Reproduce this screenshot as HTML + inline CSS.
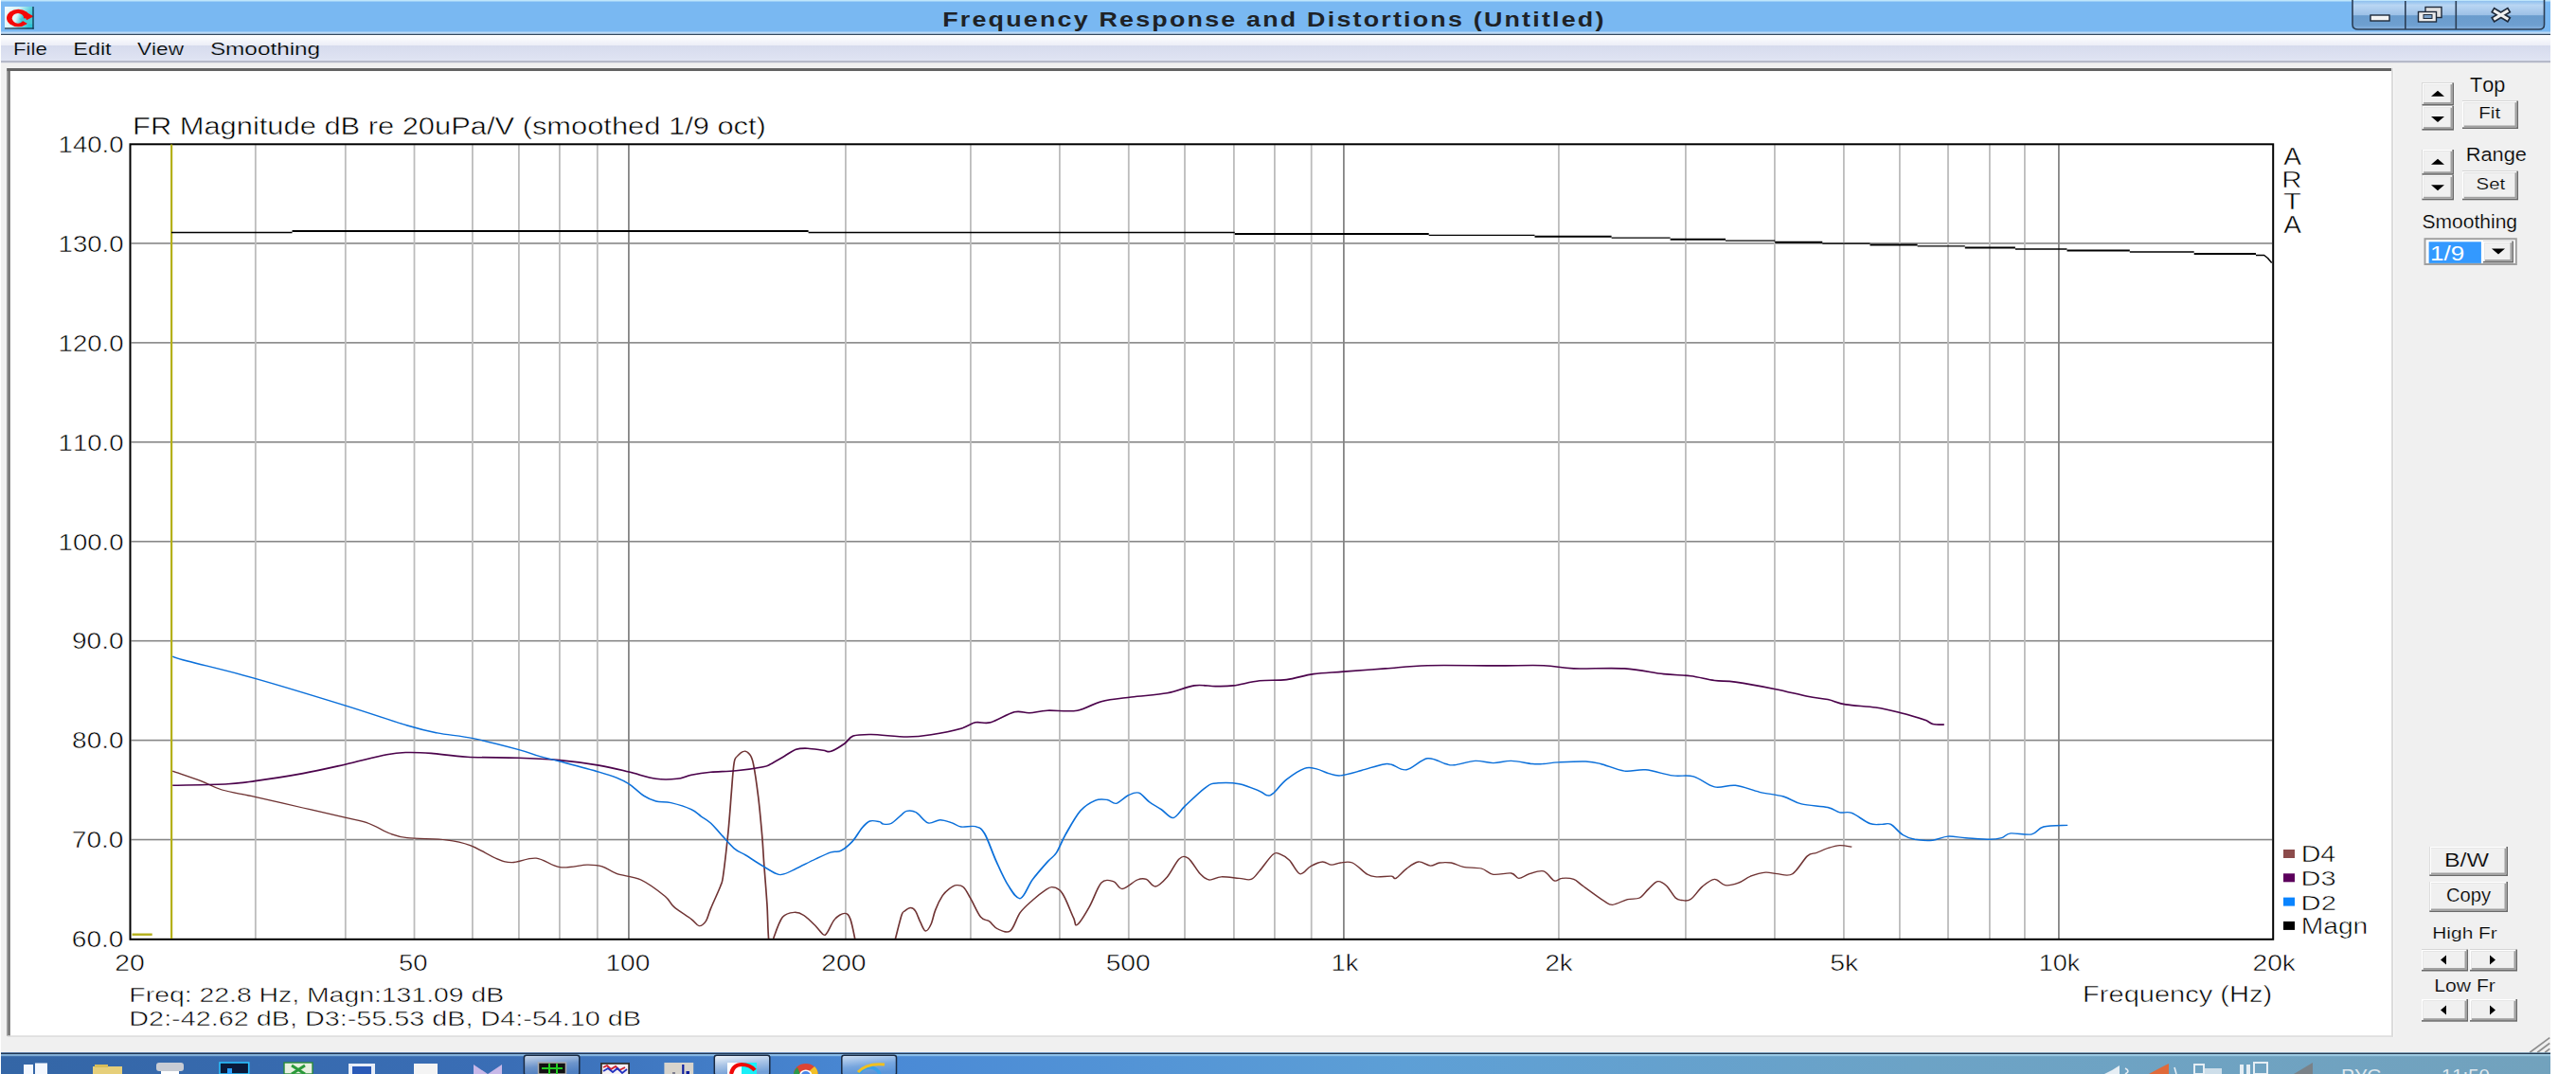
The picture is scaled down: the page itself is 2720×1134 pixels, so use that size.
<!DOCTYPE html>
<html><head><meta charset="utf-8"><style>
html,body{margin:0;padding:0;background:#fff;overflow:hidden}
svg{display:block}
text{font-family:"Liberation Sans",sans-serif;font-kerning:none}
</style></head><body>
<svg width="2720" height="1134" viewBox="0 0 2720 1134">
<rect x="0" y="0" width="2720" height="1134" fill="#ffffff"/>
<rect x="1" y="0" width="2692" height="1112" fill="#f0f0f0"/>
<defs><linearGradient id="menuG" x1="0" y1="0" x2="0" y2="1"><stop offset="0" stop-color="#ffffff"/><stop offset="0.4" stop-color="#eceef7"/><stop offset="0.42" stop-color="#d6dbed"/><stop offset="1" stop-color="#e0e4f3"/></linearGradient><linearGradient id="btnG" x1="0" y1="0" x2="0" y2="1"><stop offset="0" stop-color="#8fc0ee"/><stop offset="0.15" stop-color="#b9d6f3"/><stop offset="0.5" stop-color="#9cc0e6"/><stop offset="0.52" stop-color="#6a9ccd"/><stop offset="0.85" stop-color="#6e9fd0"/><stop offset="1" stop-color="#8ab4e2"/></linearGradient><linearGradient id="tbG" x1="0" y1="0" x2="1" y2="0"><stop offset="0" stop-color="#3466a6"/><stop offset="0.2" stop-color="#3a6eb6"/><stop offset="0.35" stop-color="#4a8ad6"/><stop offset="0.55" stop-color="#5d9fd6"/><stop offset="0.75" stop-color="#6ca3c6"/><stop offset="1" stop-color="#72a2bd"/></linearGradient><linearGradient id="pbG" x1="0" y1="0" x2="0" y2="1"><stop offset="0" stop-color="#f4f4f4"/><stop offset="1" stop-color="#e4e4e4"/></linearGradient></defs>
<rect x="1" y="0" width="2692" height="37" fill="#79b8f2"/>
<rect x="1" y="0" width="2692" height="1.5" fill="#bfe6fb"/>
<rect x="1" y="33.5" width="2692" height="2.5" fill="#bcdaf6"/>
<rect x="1" y="35.8" width="2692" height="1.4" fill="#34495e"/>
<rect x="1" y="37" width="2692" height="27" fill="url(#menuG)"/>
<rect x="1" y="64" width="2692" height="2.2" fill="#b6bac9"/>
<linearGradient id="icoG" x1="0" y1="0" x2="1" y2="0.3"><stop offset="0" stop-color="#f4fcff"/><stop offset="0.45" stop-color="#d8f4f8"/><stop offset="1" stop-color="#2cc4d4"/></linearGradient>
<rect x="5" y="7" width="30.7" height="23.7" fill="url(#icoG)"/>
<ellipse cx="19.3" cy="19" rx="12.3" ry="9.2" fill="#f40808"/>
<ellipse cx="19" cy="19.3" rx="6.2" ry="5.4" fill="url(#icoG)"/>
<path d="M20 19.8 L36 18.8 L36 25.5 L29.5 25.2 Z" fill="#48c8d6"/>
<path d="M25 11.5 L35.6 17.3 L28 21.2 Z" fill="#f40808"/>
<rect x="34.3" y="7" width="1.4" height="23.7" fill="#1c3c5c"/>
<rect x="5" y="29.3" width="30.7" height="1.4" fill="#1c3c5c"/>
<text transform="translate(995.20,28.00) scale(1.1800,1)" font-size="22.77" font-weight="bold" letter-spacing="1.866" fill="#1e2226" >Frequency Response and Distortions (Untitled)</text>
<path d="M2484 1 L2484 26 Q2484 31 2490 31 L2681 31 Q2686.5 31 2686.5 26 L2686.5 1 Z" fill="url(#btnG)"/>
<path d="M2484 0 L2484 26 Q2484 31 2490 31 L2681 31 Q2686.5 31 2686.5 26 L2686.5 0" fill="none" stroke="#2b3e55" stroke-width="1.6"/>
<rect x="2539" y="1" width="1.6" height="30" fill="#2b3e55"/>
<rect x="2592.5" y="1" width="1.6" height="30" fill="#2b3e55"/>
<rect x="2503" y="16" width="20" height="6" fill="#f4f4f4" stroke="#1e2a3a" stroke-width="1.4"/>
<rect x="2561" y="7.5" width="17" height="11" fill="#e0e0e0" stroke="#1e2a3a" stroke-width="1.4"/>
<rect x="2553.5" y="12.5" width="19" height="10.5" fill="#ececec" stroke="#1e2a3a" stroke-width="1.4"/>
<rect x="2559" y="15.5" width="9" height="4" fill="#7aa0c8" stroke="#1e2a3a" stroke-width="1"/>
<path d="M2634.5 12 L2647 19.5 M2647 12 L2634.5 19.5" stroke="#1e2a3a" stroke-width="6.5" stroke-linecap="square"/>
<path d="M2634.5 12 L2647 19.5 M2647 12 L2634.5 19.5" stroke="#f0f0f0" stroke-width="3.2" stroke-linecap="square"/>
<text transform="translate(13.98,58.00) scale(1.1876,1)" font-size="18.71" font-weight="normal" fill="#000"  stroke="#dde1f1" stroke-width="0.2">File</text>
<text transform="translate(77.28,58.00) scale(1.2526,1)" font-size="18.71" font-weight="normal" fill="#000"  stroke="#dde1f1" stroke-width="0.2">Edit</text>
<text transform="translate(145.10,58.00) scale(1.2042,1)" font-size="18.71" font-weight="normal" fill="#000"  stroke="#dde1f1" stroke-width="0.2">View</text>
<text transform="translate(221.90,58.00) scale(1.2996,1)" font-size="18.71" font-weight="normal" fill="#000"  stroke="#dde1f1" stroke-width="0.2">Smoothing</text>
<rect x="7.5" y="72" width="2520" height="1023" fill="#ffffff"/>
<rect x="7.5" y="72" width="2519" height="3" fill="#646464"/>
<rect x="7.3" y="72" width="3.4" height="1022" fill="#646464"/>
<rect x="7.3" y="75" width="1.6" height="1019" fill="#a0a0a0"/>
<rect x="2525" y="72" width="2" height="1022" fill="#dcdcdc"/>
<rect x="7.5" y="1093.3" width="2519.5" height="1.6" fill="#dcdcdc"/>
<rect x="138.5" y="885.76" width="2260.7" height="1.6" fill="#878787"/>
<rect x="138.5" y="780.83" width="2260.7" height="1.6" fill="#878787"/>
<rect x="138.5" y="675.89" width="2260.7" height="1.6" fill="#878787"/>
<rect x="138.5" y="570.95" width="2260.7" height="1.6" fill="#878787"/>
<rect x="138.5" y="466.01" width="2260.7" height="1.6" fill="#878787"/>
<rect x="138.5" y="361.07" width="2260.7" height="1.6" fill="#878787"/>
<rect x="138.5" y="256.14" width="2260.7" height="1.6" fill="#878787"/>
<rect x="268.90" y="153.1" width="1.8" height="837.9" fill="#bcbcbc"/>
<rect x="363.90" y="153.1" width="1.8" height="837.9" fill="#bcbcbc"/>
<rect x="436.60" y="153.1" width="1.8" height="837.9" fill="#bcbcbc"/>
<rect x="498.00" y="153.1" width="1.8" height="837.9" fill="#bcbcbc"/>
<rect x="547.00" y="153.1" width="1.8" height="837.9" fill="#bcbcbc"/>
<rect x="590.00" y="153.1" width="1.8" height="837.9" fill="#bcbcbc"/>
<rect x="629.90" y="153.1" width="1.8" height="837.9" fill="#bcbcbc"/>
<rect x="663.00" y="153.1" width="1.8" height="837.9" fill="#858585"/>
<rect x="892.00" y="153.1" width="1.8" height="837.9" fill="#bcbcbc"/>
<rect x="1024.00" y="153.1" width="1.8" height="837.9" fill="#bcbcbc"/>
<rect x="1118.00" y="153.1" width="1.8" height="837.9" fill="#bcbcbc"/>
<rect x="1190.90" y="153.1" width="1.8" height="837.9" fill="#bcbcbc"/>
<rect x="1250.10" y="153.1" width="1.8" height="837.9" fill="#bcbcbc"/>
<rect x="1302.00" y="153.1" width="1.8" height="837.9" fill="#bcbcbc"/>
<rect x="1345.00" y="153.1" width="1.8" height="837.9" fill="#bcbcbc"/>
<rect x="1383.80" y="153.1" width="1.8" height="837.9" fill="#bcbcbc"/>
<rect x="1418.00" y="153.1" width="1.8" height="837.9" fill="#858585"/>
<rect x="1645.00" y="153.1" width="1.8" height="837.9" fill="#bcbcbc"/>
<rect x="1779.00" y="153.1" width="1.8" height="837.9" fill="#bcbcbc"/>
<rect x="1873.00" y="153.1" width="1.8" height="837.9" fill="#bcbcbc"/>
<rect x="1946.00" y="153.1" width="1.8" height="837.9" fill="#bcbcbc"/>
<rect x="2005.00" y="153.1" width="1.8" height="837.9" fill="#bcbcbc"/>
<rect x="2056.10" y="153.1" width="1.8" height="837.9" fill="#bcbcbc"/>
<rect x="2100.00" y="153.1" width="1.8" height="837.9" fill="#bcbcbc"/>
<rect x="2137.00" y="153.1" width="1.8" height="837.9" fill="#bcbcbc"/>
<rect x="2173.00" y="153.1" width="1.8" height="837.9" fill="#858585"/>
<rect x="137.5" y="152.29999999999998" width="2262.7" height="839.5" fill="none" stroke="#000" stroke-width="2"/>
<text transform="translate(75.87,1000.30) scale(1.1527,1)" font-size="24.35" font-weight="normal" fill="#000"  stroke="#fff" stroke-width="0.5">60.0</text>
<text transform="translate(75.86,895.36) scale(1.1530,1)" font-size="24.35" font-weight="normal" fill="#000"  stroke="#fff" stroke-width="0.5">70.0</text>
<text transform="translate(76.09,790.42) scale(1.1482,1)" font-size="24.35" font-weight="normal" fill="#000"  stroke="#fff" stroke-width="0.5">80.0</text>
<text transform="translate(75.99,685.49) scale(1.1503,1)" font-size="24.35" font-weight="normal" fill="#000"  stroke="#fff" stroke-width="0.5">90.0</text>
<text transform="translate(61.60,580.55) scale(1.1304,1)" font-size="24.35" font-weight="normal" fill="#000"  stroke="#fff" stroke-width="0.5">100.0</text>
<text transform="translate(61.60,475.61) scale(1.1304,1)" font-size="24.35" font-weight="normal" fill="#000"  stroke="#fff" stroke-width="0.5">110.0</text>
<text transform="translate(61.60,370.68) scale(1.1304,1)" font-size="24.35" font-weight="normal" fill="#000"  stroke="#fff" stroke-width="0.5">120.0</text>
<text transform="translate(61.60,265.74) scale(1.1304,1)" font-size="24.35" font-weight="normal" fill="#000"  stroke="#fff" stroke-width="0.5">130.0</text>
<text transform="translate(61.60,160.80) scale(1.1304,1)" font-size="24.35" font-weight="normal" fill="#000"  stroke="#fff" stroke-width="0.5">140.0</text>
<text transform="translate(121.27,1024.80) scale(1.1925,1)" font-size="23.77" font-weight="normal" fill="#000"  stroke="#fff" stroke-width="0.5">20</text>
<text transform="translate(421.10,1024.80) scale(1.1521,1)" font-size="23.77" font-weight="normal" fill="#000"  stroke="#fff" stroke-width="0.5">50</text>
<text transform="translate(639.46,1024.80) scale(1.1834,1)" font-size="23.77" font-weight="normal" fill="#000"  stroke="#fff" stroke-width="0.5">100</text>
<text transform="translate(867.28,1024.80) scale(1.1907,1)" font-size="23.77" font-weight="normal" fill="#000"  stroke="#fff" stroke-width="0.5">200</text>
<text transform="translate(1167.67,1024.80) scale(1.1856,1)" font-size="23.77" font-weight="normal" fill="#000"  stroke="#fff" stroke-width="0.5">500</text>
<text transform="translate(1405.41,1024.80) scale(1.1558,1)" font-size="23.71" font-weight="normal" fill="#000"  stroke="#fff" stroke-width="0.5">1k</text>
<text transform="translate(1631.40,1024.80) scale(1.1721,1)" font-size="23.71" font-weight="normal" fill="#000"  stroke="#fff" stroke-width="0.5">2k</text>
<text transform="translate(1932.16,1024.80) scale(1.2018,1)" font-size="23.71" font-weight="normal" fill="#000"  stroke="#fff" stroke-width="0.5">5k</text>
<text transform="translate(2152.84,1024.80) scale(1.1381,1)" font-size="23.71" font-weight="normal" fill="#000"  stroke="#fff" stroke-width="0.5">10k</text>
<text transform="translate(2378.58,1024.80) scale(1.1867,1)" font-size="23.71" font-weight="normal" fill="#000"  stroke="#fff" stroke-width="0.5">20k</text>
<text transform="translate(140.07,142.00) scale(1.2071,1)" font-size="25.57" font-weight="normal" fill="#000"  stroke="#fff" stroke-width="0.5">FR Magnitude dB re 20uPa/V (smoothed 1/9 oct)</text>
<text transform="translate(2411.15,173.50) scale(1.0781,1)" font-size="26.02" font-weight="normal" fill="#000"  stroke="#fff" stroke-width="0.5">A</text>
<text transform="translate(2409.33,198.00) scale(1.2440,1)" font-size="23.69" font-weight="normal" fill="#000"  stroke="#fff" stroke-width="0.5">R</text>
<text transform="translate(2411.05,221.00) scale(1.2525,1)" font-size="24.71" font-weight="normal" fill="#000"  stroke="#fff" stroke-width="0.5">T</text>
<text transform="translate(2411.15,246.00) scale(1.0721,1)" font-size="26.16" font-weight="normal" fill="#000"  stroke="#fff" stroke-width="0.5">A</text>
<rect x="2411" y="897.0" width="12" height="9" fill="#8c4b4b"/>
<text transform="translate(2429.65,910.00) scale(1.2343,1)" font-size="23.26" font-weight="normal" fill="#000"  stroke="#fff" stroke-width="0.5">D4</text>
<rect x="2411" y="922.3" width="12" height="9" fill="#5c005c"/>
<text transform="translate(2429.62,935.30) scale(1.2687,1)" font-size="22.91" font-weight="normal" fill="#000"  stroke="#fff" stroke-width="0.5">D3</text>
<rect x="2411" y="947.6" width="12" height="9" fill="#0a84ff"/>
<text transform="translate(2429.60,960.60) scale(1.2757,1)" font-size="22.91" font-weight="normal" fill="#000"  stroke="#fff" stroke-width="0.5">D2</text>
<rect x="2411" y="972.9" width="12" height="9" fill="#000000"/>
<text transform="translate(2429.68,985.90) scale(1.2145,1)" font-size="23.26" font-weight="normal" fill="#000"  stroke="#fff" stroke-width="0.5">Magn</text>
<text transform="translate(2199.12,1058.00) scale(1.2553,1)" font-size="23.14" font-weight="normal" fill="#000"  stroke="#fff" stroke-width="0.5">Frequency (Hz)</text>
<text transform="translate(136.37,1057.80) scale(1.2578,1)" font-size="22.57" font-weight="normal" fill="#000"  stroke="#fff" stroke-width="0.5">Freq: 22.8 Hz, Magn:131.09 dB</text>
<text transform="translate(136.34,1082.60) scale(1.2917,1)" font-size="22.29" font-weight="normal" fill="#000"  stroke="#fff" stroke-width="0.5">D2:-42.62 dB, D3:-55.53 dB, D4:-54.10 dB</text>
<rect x="180" y="152.5" width="2.2" height="838.5" fill="#b4b01a"/>
<rect x="139.5" y="985.5" width="21.2" height="2.4" fill="#b4b01a"/>
<clipPath id="pc"><rect x="138.5" y="152.1" width="2260.7" height="838.9"/></clipPath>
<g clip-path="url(#pc)">
<polyline points="181.0,245.5 308.5,245.5" fill="none" stroke="#000" stroke-width="1.3" stroke-linejoin="round" stroke-linecap="butt"/>
<polyline points="308.5,244.0 853.6,244.0" fill="none" stroke="#000" stroke-width="2.0" stroke-linejoin="round" stroke-linecap="butt"/>
<polyline points="853.6,245.5 1303.7,245.5" fill="none" stroke="#000" stroke-width="1.3" stroke-linejoin="round" stroke-linecap="butt"/>
<polyline points="1303.7,247.0 1508.7,247.0" fill="none" stroke="#000" stroke-width="2.0" stroke-linejoin="round" stroke-linecap="butt"/>
<polyline points="1508.7,248.3 1620.5,248.3" fill="none" stroke="#000" stroke-width="1.3" stroke-linejoin="round" stroke-linecap="butt"/>
<polyline points="1620.5,249.8 1701.6,249.8" fill="none" stroke="#000" stroke-width="2.0" stroke-linejoin="round" stroke-linecap="butt"/>
<polyline points="1701.6,251.2 1763.6,251.2" fill="none" stroke="#000" stroke-width="1.3" stroke-linejoin="round" stroke-linecap="butt"/>
<polyline points="1763.6,252.7 1822.0,252.7" fill="none" stroke="#000" stroke-width="2.0" stroke-linejoin="round" stroke-linecap="butt"/>
<polyline points="1822.0,254.2 1874.2,254.2" fill="none" stroke="#000" stroke-width="1.3" stroke-linejoin="round" stroke-linecap="butt"/>
<polyline points="1874.2,255.7 1924.3,255.7" fill="none" stroke="#000" stroke-width="2.0" stroke-linejoin="round" stroke-linecap="butt"/>
<polyline points="1924.3,257.1 1974.5,257.1" fill="none" stroke="#000" stroke-width="1.3" stroke-linejoin="round" stroke-linecap="butt"/>
<polyline points="1974.5,258.6 2024.6,258.6" fill="none" stroke="#000" stroke-width="2.0" stroke-linejoin="round" stroke-linecap="butt"/>
<polyline points="2024.6,259.8 2074.8,259.8" fill="none" stroke="#000" stroke-width="1.3" stroke-linejoin="round" stroke-linecap="butt"/>
<polyline points="2074.8,261.6 2127.9,261.6" fill="none" stroke="#000" stroke-width="2.0" stroke-linejoin="round" stroke-linecap="butt"/>
<polyline points="2127.9,263.0 2182.5,263.0" fill="none" stroke="#000" stroke-width="1.3" stroke-linejoin="round" stroke-linecap="butt"/>
<polyline points="2182.5,264.5 2248.8,264.5" fill="none" stroke="#000" stroke-width="2.0" stroke-linejoin="round" stroke-linecap="butt"/>
<polyline points="2248.8,266.0 2316.7,266.0" fill="none" stroke="#000" stroke-width="1.3" stroke-linejoin="round" stroke-linecap="butt"/>
<polyline points="2316.7,268.0 2382.0,268.0" fill="none" stroke="#000" stroke-width="2.0" stroke-linejoin="round" stroke-linecap="butt"/>
<polyline points="2382.0,269.5 2390.7,269.5 2394.5,272.5 2398.7,277.5" fill="none" stroke="#000" stroke-width="1.5" stroke-linejoin="round" stroke-linecap="butt"/>
<g transform="scale(1.3,1)">
<path d="M140.2 814.1 C144.0 815.9 156.6 821.3 163.3 824.6 C170.0 827.9 173.0 831.2 180.3 834.0 C187.6 836.8 196.1 838.1 207.1 841.3 C218.0 844.5 233.9 849.4 246.1 853.0 C258.3 856.6 271.2 860.5 280.2 863.2 C289.1 866.0 293.5 866.7 299.6 869.5 C305.7 872.3 311.4 877.5 316.6 880.0 C321.8 882.5 323.1 883.5 330.8 884.6 C338.4 885.8 353.9 885.6 362.4 886.9 C370.9 888.2 375.0 889.3 381.9 892.6 C388.8 895.9 398.1 903.8 403.8 906.8 C409.4 909.8 410.7 910.7 416.0 910.6 C421.3 910.5 429.0 905.4 435.5 906.2 C441.9 907.1 448.0 914.5 454.9 915.7 C461.8 916.9 471.2 913.4 476.8 913.2 C482.5 913.1 484.9 913.2 489.0 914.8 C493.1 916.4 495.9 920.3 501.2 922.7 C506.4 925.1 514.1 925.0 520.6 929.0 C527.1 933.0 535.7 941.6 540.2 946.4 C544.6 951.1 543.8 953.5 547.4 957.5 C550.9 961.5 558.1 967.1 561.5 970.5 C564.9 973.9 565.9 977.3 567.8 977.6 C569.8 977.9 571.8 975.6 573.4 972.5 C575.0 969.4 575.3 965.4 577.3 959.2 C579.3 953.1 583.4 941.6 585.2 935.6 C586.9 929.6 586.5 933.0 587.5 923.4 C588.6 913.8 590.4 892.0 591.5 878.3 C592.5 864.6 593.1 853.4 593.8 841.4 C594.6 829.4 595.3 813.1 596.2 806.0 C597.0 798.9 597.5 800.6 598.8 798.5 C600.2 796.4 602.4 793.6 604.1 793.3 C605.7 792.9 607.5 794.2 608.8 796.4 C610.1 798.6 610.7 799.1 611.9 806.6 C613.1 814.1 614.7 828.8 615.9 841.4 C617.1 854.0 618.2 870.4 619.0 882.4 C619.8 894.4 619.9 901.1 620.6 913.1 C621.3 925.1 622.3 940.5 623.0 954.1 C623.7 967.8 623.7 988.2 624.6 995.0 C625.5 1001.8 627.8 995.9 628.5 995.0 C629.1 994.1 627.3 994.3 628.5 989.9 C629.7 985.5 632.9 972.8 635.6 968.4 C638.4 964.0 642.1 963.6 645.0 963.3 C647.9 963.0 650.0 964.0 652.9 966.4 C655.8 968.8 659.8 974.2 662.4 977.6 C665.0 981.0 667.1 985.6 668.7 986.8 C670.3 988.0 670.3 987.5 671.8 984.8 C673.4 982.1 675.7 973.9 678.1 970.5 C680.4 967.1 683.9 964.3 686.0 964.3 C688.1 964.3 689.2 965.4 690.7 970.5 C692.2 975.6 694.3 990.9 695.0 995.0" fill="none" stroke="#703434" stroke-width="1.3" stroke-linejoin="round"/>
<path d="M726.5 995.0 C727.5 990.3 730.9 972.2 732.2 966.7 C733.6 961.2 733.3 963.6 734.5 962.2 C735.8 960.8 738.2 958.5 739.7 958.5 C741.2 958.5 742.4 959.6 743.7 962.2 C745.0 964.8 746.3 970.6 747.7 974.1 C749.0 977.6 750.3 982.8 751.8 983.0 C753.2 983.2 755.0 979.3 756.3 975.6 C757.6 971.9 758.2 965.7 759.8 960.7 C761.3 955.7 763.6 949.5 765.5 945.8 C767.4 942.1 769.3 940.2 771.2 938.3 C773.1 936.4 775.0 934.8 776.9 934.6 C778.8 934.4 780.8 934.5 782.7 936.9 C784.6 939.3 786.1 943.6 788.4 948.8 C790.7 954.0 794.0 964.2 796.5 968.2 C798.9 972.2 801.0 970.5 803.3 972.6 C805.6 974.7 807.4 979.1 810.2 980.8 C813.1 982.5 817.5 985.9 820.5 983.0 C823.6 980.1 825.5 969.2 828.5 963.7 C831.6 958.2 835.4 954.3 838.8 950.3 C842.3 946.3 846.6 942.1 849.2 939.8 C851.7 937.5 852.4 936.6 854.3 936.6 C856.2 936.6 858.8 937.8 860.6 939.8 C862.4 941.8 863.3 943.8 865.2 948.8 C867.1 953.8 870.4 965.0 872.1 969.6 C873.7 974.2 872.9 978.4 875.0 976.4 C877.1 974.4 881.6 964.9 884.8 957.5 C888.1 950.1 891.3 936.7 894.5 932.2 C897.8 927.7 901.5 929.6 904.3 930.6 C907.2 931.6 908.4 938.8 911.6 938.5 C914.9 938.2 920.5 930.7 923.8 929.0 C927.0 927.3 928.6 927.2 931.1 928.4 C933.5 929.6 935.6 936.4 938.4 936.0 C941.2 935.6 944.8 930.7 948.1 925.8 C951.3 920.9 955.0 910.1 957.8 906.8 C960.7 903.5 962.3 903.6 965.2 906.2 C968.0 908.9 972.0 918.9 974.8 922.7 C977.7 926.5 979.3 928.5 982.2 929.0 C985.0 929.5 987.9 926.1 991.9 925.8 C996.0 925.5 1002.5 927.0 1006.5 927.4 C1010.6 927.8 1013.5 929.7 1016.2 928.4 C1019.0 927.1 1020.1 923.9 1023.1 919.5 C1026.0 915.1 1031.2 905.0 1034.0 902.1 C1036.8 899.2 1037.9 901.1 1040.2 902.1 C1042.4 903.1 1044.8 905.0 1047.4 908.4 C1050.0 911.8 1053.1 921.7 1055.9 922.7 C1058.8 923.8 1061.4 916.8 1064.5 914.7 C1067.5 912.6 1071.4 910.2 1074.2 910.0 C1077.1 909.8 1079.0 913.0 1081.5 913.2 C1083.9 913.4 1085.9 911.4 1088.8 911.0 C1091.6 910.6 1094.9 909.0 1098.5 911.0 C1102.2 913.0 1107.4 920.8 1110.7 923.3 C1113.9 925.8 1114.8 925.5 1118.0 925.8 C1121.2 926.1 1127.5 924.9 1130.2 925.2 C1132.8 925.5 1131.8 928.7 1133.8 927.4 C1135.9 926.1 1139.3 920.2 1142.4 917.3 C1145.4 914.4 1148.8 910.5 1152.1 910.0 C1155.3 909.5 1159.0 913.9 1161.8 914.1 C1164.7 914.3 1166.3 911.5 1169.2 911.0 C1172.0 910.5 1175.6 910.3 1178.8 911.0 C1182.1 911.7 1184.6 914.4 1188.6 915.4 C1192.7 916.4 1199.2 915.7 1203.2 917.0 C1207.3 918.3 1208.9 922.5 1212.9 923.3 C1217.0 924.1 1224.1 921.3 1227.5 922.0 C1231.0 922.7 1231.2 927.3 1233.6 927.4 C1236.1 927.5 1238.8 924.0 1242.2 922.7 C1245.5 921.4 1250.5 918.6 1253.8 919.8 C1257.2 921.0 1259.9 928.6 1262.4 929.9 C1264.8 931.2 1265.8 927.6 1268.5 927.4 C1271.1 927.1 1275.3 927.1 1278.2 928.4 C1281.0 929.7 1281.4 931.5 1285.5 935.3 C1289.5 939.1 1298.5 947.8 1302.5 951.1 C1306.6 954.4 1306.6 955.5 1309.8 955.3 C1313.1 955.0 1318.3 950.8 1322.0 949.6 C1325.7 948.4 1328.9 949.9 1331.8 948.0 C1334.6 946.1 1336.6 941.4 1339.1 938.5 C1341.5 935.6 1344.0 931.1 1346.4 930.6 C1348.8 930.1 1351.2 932.4 1353.6 935.3 C1356.0 938.2 1358.9 945.5 1360.9 948.0 C1363.0 950.5 1363.8 950.2 1365.8 950.5 C1367.9 950.8 1370.3 952.0 1373.2 949.6 C1376.0 947.2 1379.6 939.5 1382.8 936.0 C1386.1 932.5 1389.6 928.6 1392.6 928.4 C1395.7 928.2 1397.9 934.1 1401.2 934.7 C1404.4 935.3 1408.6 933.8 1412.1 932.2 C1415.5 930.6 1418.2 927.1 1421.8 925.2 C1425.5 923.4 1430.4 921.5 1434.0 921.1 C1437.6 920.7 1440.0 922.4 1443.7 922.7 C1447.3 923.0 1451.9 925.9 1455.9 922.7 C1460.0 919.5 1464.8 907.4 1468.1 903.7 C1471.3 900.0 1472.6 901.9 1475.4 900.5 C1478.1 899.1 1481.4 896.8 1484.6 895.5 C1487.8 894.2 1491.1 892.8 1494.4 892.6 C1497.6 892.4 1502.5 893.9 1504.1 894.2" fill="none" stroke="#703434" stroke-width="1.3" stroke-linejoin="round"/>
<path d="M140.2 829.3 C147.7 829.0 174.1 828.5 185.2 827.7 C196.4 826.9 196.9 826.5 207.1 824.6 C217.2 822.8 233.9 819.5 246.1 816.6 C258.3 813.7 268.8 810.5 280.2 807.2 C291.5 803.9 305.8 798.8 314.2 796.7 C322.7 794.6 324.8 794.7 330.8 794.5 C336.8 794.3 342.1 794.6 350.2 795.4 C358.3 796.2 367.7 798.4 379.5 799.2 C391.2 800.0 408.7 799.7 420.8 800.2 C433.0 800.7 441.5 801.1 452.5 802.4 C463.4 803.7 476.8 806.0 486.5 808.1 C496.3 810.2 503.2 812.7 510.9 815.1 C518.6 817.5 526.4 821.1 532.8 822.3 C539.3 823.5 545.1 823.0 549.8 822.3 C554.6 821.6 557.0 819.5 561.5 818.3 C566.1 817.1 571.3 816.0 577.3 815.2 C583.3 814.5 590.7 814.7 597.8 813.8 C604.9 812.9 615.1 810.9 619.8 809.7 C624.6 808.5 623.3 808.5 626.2 806.6 C629.0 804.7 633.7 801.0 637.2 798.4 C640.6 795.8 643.5 792.7 646.6 791.3 C649.8 789.9 652.4 790.0 656.1 790.2 C659.8 790.4 665.5 791.8 668.7 792.3 C671.8 792.8 672.1 794.5 675.0 793.3 C677.9 792.1 683.0 787.8 686.0 785.1 C689.0 782.4 689.4 778.7 693.0 777.1 C696.6 775.5 700.3 775.4 707.6 775.5 C714.9 775.6 728.7 778.0 736.8 778.0 C744.9 778.0 749.0 777.3 756.3 775.8 C763.6 774.3 774.6 771.4 780.6 769.2 C786.6 767.0 788.3 763.9 792.3 762.8 C796.3 761.7 799.2 764.6 804.5 762.8 C809.7 761.0 818.6 753.5 823.9 751.8 C829.2 750.1 831.7 753.0 836.2 752.7 C840.6 752.4 844.3 750.6 850.8 750.2 C857.3 749.8 867.8 751.8 875.1 750.2 C882.4 748.6 887.2 743.1 894.5 740.7 C901.8 738.3 910.0 737.5 918.9 736.0 C927.8 734.5 939.6 733.8 948.1 731.8 C956.6 729.8 963.5 725.1 970.0 723.9 C976.5 722.7 981.8 724.6 987.1 724.6 C992.4 724.6 995.7 724.9 1001.7 723.9 C1007.7 722.9 1015.9 719.8 1023.1 718.8 C1030.3 717.8 1037.7 718.8 1045.0 717.6 C1052.3 716.4 1059.2 713.0 1066.9 711.6 C1074.6 710.2 1081.5 710.1 1091.2 709.1 C1101.0 708.1 1113.9 707.0 1125.3 705.9 C1136.7 704.8 1144.4 703.2 1159.4 702.7 C1174.4 702.2 1199.6 702.9 1215.4 702.9 C1231.1 702.9 1243.4 702.2 1253.8 702.7 C1264.3 703.2 1267.2 705.4 1278.2 705.9 C1289.1 706.4 1307.4 704.9 1319.5 705.9 C1331.7 706.9 1342.3 710.3 1351.2 711.6 C1360.2 712.9 1366.3 712.6 1373.2 713.8 C1380.1 714.9 1386.5 717.5 1392.6 718.5 C1398.7 719.5 1401.5 718.6 1409.6 720.1 C1417.7 721.6 1431.6 724.9 1441.3 727.4 C1451.1 729.9 1460.9 733.4 1468.1 735.3 C1475.3 737.2 1479.4 737.2 1484.6 738.6 C1489.8 740.0 1492.7 742.5 1499.2 743.9 C1505.7 745.3 1516.2 745.6 1523.5 747.0 C1530.8 748.4 1536.6 750.3 1543.1 752.4 C1549.6 754.5 1558.1 757.7 1562.5 759.7 C1567.0 761.7 1567.1 763.5 1569.8 764.4 C1572.6 765.3 1577.5 765.0 1579.1 765.1" fill="none" stroke="#4c044c" stroke-width="1.6" stroke-linejoin="round"/>
<path d="M140.2 693.2 C142.2 694.0 141.2 694.1 152.3 698.0 C163.5 701.9 185.8 708.5 207.1 716.3 C228.4 724.1 259.5 736.5 280.2 744.8 C300.8 753.1 318.3 761.1 330.8 766.0 C343.3 770.9 346.2 771.6 355.1 773.9 C364.0 776.2 373.3 776.7 384.3 779.6 C395.3 782.5 411.9 788.2 420.8 791.3 C429.8 794.4 432.2 796.2 437.8 798.3 C443.5 800.4 446.8 801.2 454.9 804.0 C463.0 806.8 478.8 812.2 486.5 815.1 C494.2 818.0 497.1 819.3 501.2 821.4 C505.2 823.5 507.3 824.5 510.9 827.7 C514.6 830.9 519.4 837.4 523.1 840.4 C526.7 843.4 529.2 844.8 532.8 846.0 C536.5 847.2 540.2 846.2 545.0 847.7 C549.8 849.2 557.5 852.3 561.5 854.7 C565.6 857.1 566.8 859.5 569.4 861.9 C572.0 864.3 574.7 866.0 577.3 869.1 C579.9 872.2 582.0 875.9 585.2 880.3 C588.3 884.7 592.8 891.9 596.2 895.7 C599.6 899.5 602.2 900.2 605.6 902.9 C609.0 905.6 612.5 908.8 616.7 912.1 C620.9 915.4 627.4 920.9 630.8 922.7 C634.3 924.5 634.5 923.6 637.2 922.7 C639.8 921.8 642.4 919.8 646.6 917.2 C650.8 914.6 657.7 909.9 662.4 907.0 C667.1 904.1 671.6 901.2 675.0 899.8 C678.4 898.4 680.0 900.3 682.8 898.4 C685.7 896.5 689.4 892.5 692.3 888.5 C695.2 884.5 697.8 877.8 700.2 874.2 C702.5 870.6 704.1 868.1 706.5 867.0 C708.8 865.9 712.5 867.2 714.3 867.7 C716.1 868.2 715.9 869.8 717.5 870.1 C719.0 870.4 721.4 871.0 723.8 869.5 C726.1 868.0 729.6 863.1 731.7 860.9 C733.8 858.7 734.3 856.9 736.4 856.4 C738.4 855.9 741.2 855.7 744.1 857.8 C747.0 859.9 750.6 867.6 753.8 868.9 C757.1 870.2 760.4 865.7 763.6 865.7 C766.9 865.7 770.5 867.7 773.3 868.9 C776.1 870.1 777.4 872.4 780.6 873.0 C783.8 873.6 789.1 871.6 792.3 872.7 C795.5 873.9 796.8 873.7 799.6 879.9 C802.5 886.1 806.1 900.8 809.4 910.0 C812.6 919.2 815.8 928.9 819.1 935.3 C822.3 941.7 825.6 949.6 828.8 948.6 C832.1 947.6 834.9 935.4 838.5 929.0 C842.2 922.6 847.5 914.8 850.8 910.0 C854.0 905.2 855.6 905.2 858.0 900.5 C860.4 895.8 862.1 888.9 865.3 881.5 C868.6 874.1 873.5 862.3 877.5 856.2 C881.6 850.1 886.1 847.1 889.7 845.1 C893.3 843.1 896.6 844.0 899.4 844.5 C902.2 845.0 903.8 849.1 906.7 848.3 C909.5 847.5 913.4 841.6 916.5 839.7 C919.5 837.9 922.2 836.0 925.0 837.2 C927.8 838.4 930.4 843.8 933.5 846.7 C936.5 849.6 940.0 851.8 943.2 854.6 C946.5 857.4 949.8 864.1 953.0 863.5 C956.2 862.9 958.2 856.2 962.7 850.8 C967.2 845.4 975.3 834.9 979.8 830.9 C984.2 826.9 985.0 827.3 989.5 826.8 C993.9 826.3 1000.9 826.3 1006.5 827.7 C1012.1 829.1 1019.3 833.3 1023.1 835.3 C1026.8 837.3 1027.3 839.3 1029.2 839.7 C1031.0 840.1 1031.4 840.6 1034.0 837.8 C1036.6 835.0 1040.7 827.4 1045.0 823.0 C1049.3 818.6 1055.6 813.1 1059.6 811.3 C1063.7 809.4 1066.1 811.0 1069.3 811.9 C1072.6 812.8 1075.8 815.4 1079.1 816.6 C1082.3 817.8 1084.3 819.4 1088.8 818.9 C1093.2 818.4 1100.2 815.5 1105.8 813.5 C1111.5 811.5 1118.8 808.2 1122.8 807.2 C1126.9 806.2 1126.9 806.3 1130.2 807.2 C1133.4 808.1 1137.5 813.9 1142.4 812.8 C1147.3 811.7 1154.1 801.8 1159.4 800.8 C1164.7 799.8 1170.3 805.3 1174.0 806.5 C1177.7 807.7 1177.3 808.3 1181.3 807.8 C1185.4 807.3 1193.0 803.8 1198.3 803.4 C1203.6 803.0 1208.1 805.6 1212.9 805.6 C1217.8 805.6 1222.3 803.2 1227.5 803.4 C1232.8 803.5 1240.2 806.0 1244.6 806.5 C1249.0 807.0 1250.3 806.8 1253.8 806.5 C1257.4 806.2 1260.3 805.3 1266.0 804.9 C1271.7 804.5 1282.2 803.7 1287.9 804.0 C1293.6 804.3 1294.8 804.8 1300.1 806.5 C1305.3 808.2 1313.4 813.1 1319.5 814.1 C1325.6 815.1 1330.1 812.0 1336.6 812.8 C1343.1 813.6 1352.1 817.7 1358.5 818.9 C1365.0 820.1 1369.9 817.8 1375.5 819.8 C1381.2 821.8 1386.9 829.3 1392.6 830.9 C1398.3 832.5 1403.5 828.4 1409.6 829.3 C1415.7 830.2 1422.6 834.3 1429.1 836.3 C1435.6 838.2 1442.9 838.9 1448.6 841.0 C1454.3 843.1 1457.2 847.0 1463.2 848.9 C1469.2 850.8 1479.4 851.0 1484.6 852.5 C1489.8 854.0 1491.1 856.8 1494.4 857.8 C1497.6 858.8 1500.0 856.4 1504.1 858.4 C1508.1 860.4 1514.6 867.5 1518.7 869.5 C1522.8 871.5 1525.6 870.2 1528.5 870.4 C1531.3 870.5 1532.9 868.5 1535.8 870.4 C1538.6 872.2 1542.2 878.9 1545.5 881.5 C1548.7 884.1 1551.2 885.3 1555.2 886.3 C1559.3 887.2 1565.4 887.7 1569.8 887.2 C1574.3 886.7 1577.5 883.5 1582.0 883.1 C1586.5 882.7 1590.9 884.2 1596.6 884.7 C1602.3 885.2 1611.2 886.3 1616.1 886.3 C1620.9 886.3 1622.9 885.8 1625.8 884.7 C1628.6 883.6 1629.0 880.5 1633.1 879.9 C1637.1 879.3 1645.7 882.0 1650.2 880.9 C1654.6 879.8 1655.0 874.6 1659.8 873.0 C1664.7 871.4 1676.1 871.7 1679.4 871.4" fill="none" stroke="#0c70da" stroke-width="1.4" stroke-linejoin="round"/>
</g>
</g>
<rect x="2557.4" y="87.4" width="33.60" height="24.10" fill="#6a6a6a"/>
<rect x="2557.4" y="87.4" width="32.00" height="22.50" fill="#ffffff"/>
<rect x="2559.1" y="89.10000000000001" width="30.30" height="20.80" fill="#a0a0a0"/>
<rect x="2559.1" y="89.10000000000001" width="28.40" height="18.90" fill="#f0f0f0"/>
<path d="M2567 101.8 L2581 101.8 L2574 95.8 Z" fill="#000"/>
<rect x="2557.4" y="112" width="33.60" height="25.60" fill="#6a6a6a"/>
<rect x="2557.4" y="112" width="32.00" height="24.00" fill="#ffffff"/>
<rect x="2559.1" y="113.7" width="30.30" height="22.30" fill="#a0a0a0"/>
<rect x="2559.1" y="113.7" width="28.40" height="20.40" fill="#f0f0f0"/>
<path d="M2567 123 L2581 123 L2574 129 Z" fill="#000"/>
<text transform="translate(2608.12,96.60) scale(1.0171,1)" font-size="21.22" font-weight="normal" fill="#000"  stroke="#f0f0f0" stroke-width="0.2">Top</text>
<rect x="2600" y="106.5" width="59.00" height="29.50" fill="#6a6a6a"/>
<rect x="2600" y="106.5" width="57.40" height="27.90" fill="#ffffff"/>
<rect x="2601.7" y="108.2" width="55.70" height="26.20" fill="#a0a0a0"/>
<rect x="2601.7" y="108.2" width="53.80" height="24.30" fill="#f0f0f0"/>
<text transform="translate(2617.31,124.50) scale(1.2514,1)" font-size="16.43" font-weight="normal" fill="#000"  stroke="#ededed" stroke-width="0.2">Fit</text>
<rect x="2557.4" y="158" width="33.60" height="26.70" fill="#6a6a6a"/>
<rect x="2557.4" y="158" width="32.00" height="25.10" fill="#ffffff"/>
<rect x="2559.1" y="159.7" width="30.30" height="23.40" fill="#a0a0a0"/>
<rect x="2559.1" y="159.7" width="28.40" height="21.50" fill="#f0f0f0"/>
<path d="M2567 173.8 L2581 173.8 L2574 167.8 Z" fill="#000"/>
<rect x="2557.4" y="185" width="33.60" height="26.30" fill="#6a6a6a"/>
<rect x="2557.4" y="185" width="32.00" height="24.70" fill="#ffffff"/>
<rect x="2559.1" y="186.7" width="30.30" height="23.00" fill="#a0a0a0"/>
<rect x="2559.1" y="186.7" width="28.40" height="21.10" fill="#f0f0f0"/>
<path d="M2567 195.3 L2581 195.3 L2574 201.3 Z" fill="#000"/>
<text transform="translate(2603.71,170.30) scale(1.1280,1)" font-size="19.33" font-weight="normal" fill="#000"  stroke="#f0f0f0" stroke-width="0.2">Range</text>
<rect x="2600" y="180.6" width="59.00" height="30.70" fill="#6a6a6a"/>
<rect x="2600" y="180.6" width="57.40" height="29.10" fill="#ffffff"/>
<rect x="2601.7" y="182.29999999999998" width="55.70" height="27.40" fill="#a0a0a0"/>
<rect x="2601.7" y="182.29999999999998" width="53.80" height="25.50" fill="#f0f0f0"/>
<text transform="translate(2614.58,200.00) scale(1.2930,1)" font-size="15.75" font-weight="normal" fill="#000"  stroke="#ededed" stroke-width="0.2">Set</text>
<text transform="translate(2557.44,241.00) scale(1.0302,1)" font-size="20.43" font-weight="normal" fill="#000"  stroke="#f0f0f0" stroke-width="0.2">Smoothing</text>
<rect x="2559.5" y="251.2" width="98.3" height="28.8" fill="#a0a0a0"/>
<rect x="2561.5" y="253.2" width="94.3" height="24.8" fill="#ffffff"/>
<rect x="2564.6" y="255.3" width="55.3" height="22.6" fill="#3399ff"/>
<text transform="translate(2566.02,275.00) scale(1.1766,1)" font-size="22.14" font-weight="normal" fill="#ffffff" >1/9</text>
<rect x="2622" y="254.5" width="32.00" height="23.00" fill="#6a6a6a"/>
<rect x="2622" y="254.5" width="30.40" height="21.40" fill="#ffffff"/>
<rect x="2623.7" y="256.2" width="28.70" height="19.70" fill="#a0a0a0"/>
<rect x="2623.7" y="256.2" width="26.80" height="17.80" fill="#f0f0f0"/>
<path d="M2631 262.5 L2645 262.5 L2638 268.5 Z" fill="#000"/>
<rect x="2565.3" y="894" width="82.70" height="31.00" fill="#6a6a6a"/>
<rect x="2565.3" y="894" width="81.10" height="29.40" fill="#ffffff"/>
<rect x="2567.0" y="895.7" width="79.40" height="27.70" fill="#a0a0a0"/>
<rect x="2567.0" y="895.7" width="77.50" height="25.80" fill="#f0f0f0"/>
<text transform="translate(2580.95,915.00) scale(1.2940,1)" font-size="19.29" font-weight="normal" fill="#000"  stroke="#ededed" stroke-width="0.2">B/W</text>
<rect x="2565.3" y="931" width="82.70" height="32.00" fill="#6a6a6a"/>
<rect x="2565.3" y="931" width="81.10" height="30.40" fill="#ffffff"/>
<rect x="2567.0" y="932.7" width="79.40" height="28.70" fill="#a0a0a0"/>
<rect x="2567.0" y="932.7" width="77.50" height="26.80" fill="#f0f0f0"/>
<text transform="translate(2582.98,951.50) scale(1.0427,1)" font-size="19.33" font-weight="normal" fill="#000"  stroke="#ededed" stroke-width="0.2">Copy</text>
<text transform="translate(2568.28,991.00) scale(1.2200,1)" font-size="17.14" font-weight="normal" fill="#000"  stroke="#f0f0f0" stroke-width="0.2">High Fr</text>
<rect x="2557" y="1002.5" width="49.00" height="23.00" fill="#6a6a6a"/>
<rect x="2557" y="1002.5" width="47.40" height="21.40" fill="#ffffff"/>
<rect x="2558.7" y="1004.2" width="45.70" height="19.70" fill="#a0a0a0"/>
<rect x="2558.7" y="1004.2" width="43.80" height="17.80" fill="#f0f0f0"/>
<path d="M2583 1008.5 L2583 1018.5 L2577 1013.5 Z" fill="#000"/>
<rect x="2608" y="1002.5" width="50.00" height="23.00" fill="#6a6a6a"/>
<rect x="2608" y="1002.5" width="48.40" height="21.40" fill="#ffffff"/>
<rect x="2609.7" y="1004.2" width="46.70" height="19.70" fill="#a0a0a0"/>
<rect x="2609.7" y="1004.2" width="44.80" height="17.80" fill="#f0f0f0"/>
<path d="M2629 1008.5 L2629 1018.5 L2635 1013.5 Z" fill="#000"/>
<text transform="translate(2570.26,1046.70) scale(1.1202,1)" font-size="18.90" font-weight="normal" fill="#000"  stroke="#f0f0f0" stroke-width="0.2">Low Fr</text>
<rect x="2557" y="1055" width="49.00" height="23.70" fill="#6a6a6a"/>
<rect x="2557" y="1055" width="47.40" height="22.10" fill="#ffffff"/>
<rect x="2558.7" y="1056.7" width="45.70" height="20.40" fill="#a0a0a0"/>
<rect x="2558.7" y="1056.7" width="43.80" height="18.50" fill="#f0f0f0"/>
<path d="M2583 1061.5 L2583 1071.5 L2577 1066.5 Z" fill="#000"/>
<rect x="2608" y="1055" width="50.00" height="23.70" fill="#6a6a6a"/>
<rect x="2608" y="1055" width="48.40" height="22.10" fill="#ffffff"/>
<rect x="2609.7" y="1056.7" width="46.70" height="20.40" fill="#a0a0a0"/>
<rect x="2609.7" y="1056.7" width="44.80" height="18.50" fill="#f0f0f0"/>
<path d="M2629 1061.5 L2629 1071.5 L2635 1066.5 Z" fill="#000"/>
<path d="M2671.2 1111.2 L2692.3 1095.6" stroke="#8e8e8e" stroke-width="1.7"/>
<path d="M2679.2 1111.2 L2692.3 1101.5" stroke="#8e8e8e" stroke-width="1.7"/>
<path d="M2687.2 1111.2 L2692.3 1107.4" stroke="#8e8e8e" stroke-width="1.7"/>
<rect x="1" y="1111.3" width="2692" height="22.7" fill="url(#tbG)"/>
<rect x="1" y="1111.8" width="2692" height="1.1" fill="#1e3046"/>
<rect x="1" y="1113" width="2692" height="2.2" fill="#c0e8fa" opacity="0.55"/>
<linearGradient id="actG" x1="0" y1="0" x2="0.3" y2="1"><stop offset="0" stop-color="#ffffff" stop-opacity="0.75"/><stop offset="0.6" stop-color="#ffffff" stop-opacity="0.25"/><stop offset="1" stop-color="#ffffff" stop-opacity="0.1"/></linearGradient>
<linearGradient id="actG2" x1="0" y1="0" x2="0.3" y2="1"><stop offset="0" stop-color="#ffffff" stop-opacity="0.95"/><stop offset="0.5" stop-color="#ffffff" stop-opacity="0.55"/><stop offset="1" stop-color="#ffffff" stop-opacity="0.25"/></linearGradient>
<rect x="553.4" y="1114.2" width="58.4" height="21" rx="2.5" fill="url(#actG)" stroke="#1a2a42" stroke-width="1.5"/>
<rect x="754.3" y="1114.2" width="58.5" height="21" rx="2.5" fill="url(#actG2)" stroke="#1a2a42" stroke-width="1.5"/>
<rect x="888.8" y="1114.2" width="57.7" height="21" rx="2.5" fill="url(#actG)" stroke="#1a2a42" stroke-width="1.5"/>
<rect x="25" y="1124" width="10" height="10" fill="#f4f8ff"/>
<rect x="37" y="1122.5" width="13" height="11.5" fill="#f4f8ff"/>
<rect x="98" y="1126" width="31" height="8" fill="#e6cf7a"/>
<rect x="100" y="1124" width="14" height="3" fill="#d8bd5a"/>
<rect x="165" y="1122" width="29" height="9" rx="3" fill="#c8ccd4"/>
<rect x="170" y="1131" width="19" height="3" fill="#ffffff"/>
<rect x="232" y="1122" width="30.7" height="12" fill="#0a1a3a" stroke="#2ac0ff" stroke-width="1.6"/>
<rect x="240" y="1128" width="5" height="6" fill="#2aa0ff"/>
<rect x="300" y="1122" width="30" height="12" fill="#e8f0e0" stroke="#2a8a3a" stroke-width="1.4"/>
<path d="M308 1125 L322 1134 M322 1125 L308 1134" stroke="#2a9a3a" stroke-width="3"/>
<rect x="368" y="1123" width="28" height="11" fill="#e8eef8"/>
<rect x="372" y="1126" width="20" height="8" fill="#2a5ab8"/>
<rect x="437" y="1123" width="25" height="11" fill="#f4f4f4"/>
<path d="M500 1124 L515 1134 L530 1124 L530 1134 L500 1134 Z" fill="#c8b8e8"/>
<rect x="568.5" y="1122" width="29" height="12" fill="#111" stroke="#aaa" stroke-width="1.5"/>
<path d="M572 1128 L594 1128 M580 1123 L580 1134 M588 1123 L588 1134" stroke="#22cc22" stroke-width="2"/>
<rect x="634" y="1122" width="31" height="12" fill="#f4f0f4"/>
<rect x="634" y="1122" width="31" height="1.8" fill="#303030"/><rect x="634" y="1122" width="1.8" height="12" fill="#303030"/><rect x="663.2" y="1122" width="1.8" height="12" fill="#303030"/>
<path d="M637 1127 L641 1125 L645 1129 L650 1126 L654 1130 L660 1127" stroke="#d02030" stroke-width="1.8" fill="none"/>
<path d="M637 1131 L642 1128 L647 1132 L652 1128 L657 1133 L662 1129" stroke="#2030c0" stroke-width="1.8" fill="none"/>
<rect x="701.4" y="1122" width="30.8" height="12" fill="#d8d4cc"/>
<path d="M721.3 1124 L721.3 1134" stroke="#1020a0" stroke-width="2.2"/>
<rect x="724.5" y="1131" width="3.5" height="3" fill="#1020a0"/><rect x="710" y="1132" width="3" height="2" fill="#808090"/>
<rect x="768" y="1122" width="15" height="12" fill="#ffffff"/>
<rect x="783" y="1122" width="16" height="12" fill="#18f0f8"/>
<path d="M772 1134 Q774 1124 783 1124 Q792 1124 797 1130" fill="none" stroke="#f00808" stroke-width="4.2"/>
<path d="M838 1134 A12.8 11 0 0 1 863.6 1134 Z" fill="#dd4433"/>
<path d="M851 1134 L863.6 1134 A12.8 11 0 0 0 860 1126 Z" fill="#f2c027"/>
<path d="M838 1134 L845 1134 L842 1127 A12.8 11 0 0 0 838 1134 Z" fill="#2a9a4a"/>
<ellipse cx="850.8" cy="1135" rx="6.5" ry="5.5" fill="#ffffff"/><ellipse cx="850.8" cy="1135" rx="4.8" ry="4" fill="#4a86e8"/>
<ellipse cx="918" cy="1136" rx="11" ry="9" fill="none" stroke="#3aa0e8" stroke-width="3.5"/>
<path d="M906 1132 Q915 1122 934 1124" fill="none" stroke="#f0c020" stroke-width="3"/>
<path d="M2222 1134 L2230 1130 L2238 1125 L2238 1134 Z" fill="#e6eef4"/>
<path d="M2244 1128 Q2250 1131 2244 1134" stroke="#e6eef4" stroke-width="1.6" fill="none"/>
<path d="M2269 1134 L2280 1128 L2290 1123 L2290 1134 Z" fill="#e06a3a"/>
<path d="M2296 1127 L2298 1134" stroke="#e6eef4" stroke-width="1.6"/>
<rect x="2317" y="1124" width="10" height="10" fill="none" stroke="#e6eef4" stroke-width="2"/>
<rect x="2328" y="1128" width="18" height="6" fill="#e6eef4" opacity="0.8"/>
<rect x="2365" y="1124" width="4" height="10" fill="#e6eef4"/><rect x="2372" y="1124" width="4" height="10" fill="#e6eef4"/>
<rect x="2380" y="1122" width="14" height="12" fill="none" stroke="#e6eef4" stroke-width="2"/>
<path d="M2422 1134 L2442 1122 L2442 1134 Z" fill="#7a8288"/>
<text transform="translate(2471.99,1141.50) scale(1.0891,1)" font-size="19.19" font-weight="normal" fill="#dfe8ee" >РУС</text>
<text transform="translate(2577.95,1141.50) scale(1.0587,1)" font-size="19.19" font-weight="normal" fill="#dfe8ee" >11:50</text>
</svg></body></html>
